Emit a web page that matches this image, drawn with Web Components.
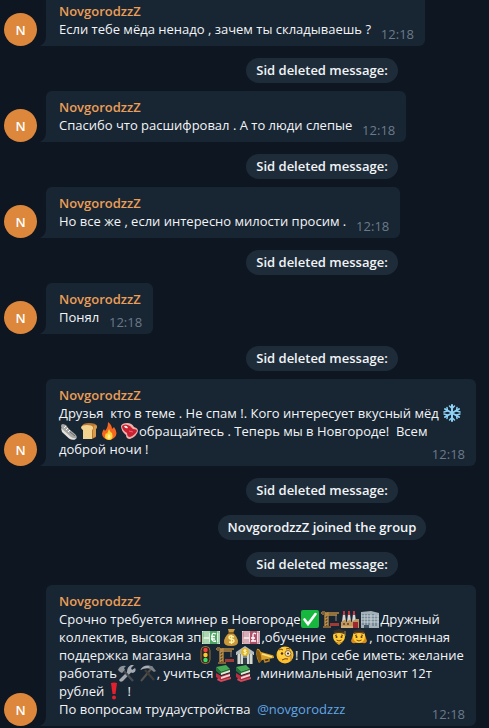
<!DOCTYPE html>
<html lang="ru">
<head>
<meta charset="utf-8">
<title>Chat</title>
<style>
  html { background: #0e1621; }
  body { margin: 0; overflow-x: hidden; background: #0e1621; font: 13px/18px "Open Sans", "Noto Sans", sans-serif; color: #f2f4f6; }
</style>
</head>
<body>
<chat-history>
  <chat-message author="NovgorodzzZ" time="12:18">Если тебе мёда ненадо , зачем ты складываешь ?</chat-message>
  <service-note>Sid deleted message:</service-note>
  <chat-message author="NovgorodzzZ" time="12:18">Спасибо что расшифровал . А то люди слепые</chat-message>
  <service-note>Sid deleted message:</service-note>
  <chat-message author="NovgorodzzZ" time="12:18">Но все же , если интересно милости просим .</chat-message>
  <service-note>Sid deleted message:</service-note>
  <chat-message author="NovgorodzzZ" time="12:18">Понял</chat-message>
  <service-note>Sid deleted message:</service-note>
  <chat-message author="NovgorodzzZ" time="12:18">Друзья  кто в теме . Не спам !. Кого интересует вкусный мёд <emoji-icon name="snow"></emoji-icon> <emoji-icon name="shoe"></emoji-icon><emoji-icon name="bread"></emoji-icon><emoji-icon name="fire"></emoji-icon><emoji-icon name="meat"></emoji-icon>обращайтесь . Теперь мы в Новгороде!  Всем доброй ночи !</chat-message>
  <service-note>Sid deleted message:</service-note>
  <service-note>NovgorodzzZ joined the group</service-note>
  <service-note>Sid deleted message:</service-note>
  <chat-message author="NovgorodzzZ" time="12:18">Срочно требуется минер в Новгороде<emoji-icon name="check"></emoji-icon><emoji-icon name="crane"></emoji-icon><emoji-icon name="factory"></emoji-icon><emoji-icon name="office"></emoji-icon>Дружный коллектив, высокая зп<emoji-icon name="euro"></emoji-icon><emoji-icon name="bag"></emoji-icon><emoji-icon name="pound"></emoji-icon>,обучение <emoji-icon name="student"></emoji-icon><emoji-icon name="girl"></emoji-icon>, постоянная поддержка магазина <emoji-icon name="light"></emoji-icon><emoji-icon name="crane"></emoji-icon><emoji-icon name="bank"></emoji-icon><emoji-icon name="horn"></emoji-icon><emoji-icon name="monocle"></emoji-icon>! При себе иметь: желание работать<emoji-icon name="tools"></emoji-icon><emoji-icon name="picks"></emoji-icon>, учиться<emoji-icon name="books"></emoji-icon><emoji-icon name="books"></emoji-icon> ,минимальный депозит 12т рублей<emoji-icon name="bang"></emoji-icon> !
По вопросам трудаустройства <user-mention handle="novgorodzzz"></user-mention></chat-message>
</chat-history>

<script>
const define = (name, html, setup) => {
  const template = document.createElement('template');
  template.innerHTML = html;
  customElements.define(name, class extends HTMLElement {
    constructor() {
      super();
      this.attachShadow({ mode: 'open' }).append(template.content.cloneNode(true));
    }
    connectedCallback() { if (setup) setup(this, this.shadowRoot); }
  });
};

const crane = '<path d="M4 2v15M7 2v15M4 4h3M4 7l3-3M4 10l3-3M4 13l3-3M4 16l3-3M0 3h18M7 5h9" stroke="#b98a43" stroke-width="1.4" fill="none"/><path d="M1 1h3v4H1z" fill="#80633b"/><path d="M15 5v6" stroke="#9a8468"/><path d="M9 13h9v3H9z" fill="#a23a36"/><path d="M2 16h8v2H2z" fill="#806138"/>';
const face = '<path d="M3 8q0-4 6-4t6 4q0 6-6 7-6-1-6-7z" fill="#ffcc36"/><path d="M5 7.500l2-.5M11 7l2 .5" stroke="#704515"/><circle cx="6.500" cy="9" r="1" fill="#56330e"/><circle cx="11.500" cy="9" r="1" fill="#56330e"/><path d="M6.500 12q2.500 2 5 0" stroke="#81460e" fill="none"/>';
const note = (paper, ink, mark) => `<path d="M0 3h18v13H0z" fill="${paper}"/><path d="M1 4h16v11H1z" fill="none" stroke="${ink}" stroke-width=".7"/><path d="M8 3h7v13H8z" fill="${ink}"/><path d="M1 5h6v4H1zM2 11h5v3H2z" fill="${ink}" opacity=".35"/><path d="${mark}" fill="none" stroke="#fff" stroke-width="1.300"/>`;
const ICONS = {
  snow: '<g fill="none" stroke="#8dd3f7" stroke-width="2" stroke-linecap="round"><path d="M9 1v16M2 5l14 8M16 5L2 13"/><path stroke-width="1.500" d="M6.500 2L9 4.500 11.500 2M6.500 16L9 13.500l2.500 2.500M1 8l3.500-1L4 3.500M17 10l-3.500 1 .5 3.500M1 10l3.500 1-.5 3.500M17 8l-3.500-1L14 3.500"/></g>',
  shoe: '<path d="M1 4q0-2 2-2l3 1 3 4 6 5q3 3 1 5-3 1-5-1L2 8z" fill="#a6a6a4"/><path d="M1 6l10 9q3 2 5 1l-1 1.500q-3 1-6-1L2 10z" fill="#e4e1dc"/><path d="M6 4l-2 2M8 6l-2 2M10 8l-2 2" stroke="#f5f5f5"/><path d="M10 10l5 4" stroke="#66696b"/>',
  bread: '<path d="M2 4q1-3 7-3 7 0 8 3 0 2-1 3v8l-4 2H3V8Q1 6 2 4z" fill="#b97630"/><path d="M1 5q1-2 6-2t6 2q1 2-1 3v9H3V8Q1 7 1 5z" fill="#f4d38e"/><path d="M13 4q2 1 0 4v8l3-2V7q2-2 0-4z" fill="#d69b4c"/>',
  fire: '<path d="M8 0q4 3 4 7l2-2q5 7 0 11-5 4-10 0-4-4 0-9l1 2q3-3 3-9z" fill="#f46721"/><path d="M9 7q1 3 3 4 2 7-3 7-6-1-3-7l1 1z" fill="#ffd637"/><path d="M9 12q3 3 0 5-3-1 0-5z" fill="#fff3a1"/>',
  meat: '<path d="M1 4q1-3 6-3 5 0 7 4 4 1 4 4-1 5-8 8-4 0-4-4-5-4-5-9z" fill="#efb0ac"/><path d="M2 4q3-3 8 0l3 3q4 0 4 2-2 4-7 6-3 0-3-4-5-3-5-7z" fill="#c92132"/><path d="M4 4q3-1 4 2-3 1-4-2z" fill="#fff0e8"/><path d="M9 9l4 1" stroke="#ed6470"/>',
  check: '<rect width="18" height="18" rx="2" fill="#16b83e"/><path d="M3.500 9.500l3.500 4.500L14.500 4" stroke="#fff" stroke-width="2.600" fill="none" stroke-linecap="round"/>',
  crane,
  factory: '<path d="M2 4h2l1 8H1zM7 4h2l1 8H6zM12 4h2l1 8h-4z" fill="#d5d5d5"/><path d="M2 1h2v4H2zM7 1h2v4H7zM12 1h2v4h-2z" fill="#c8333e"/><path d="M0 12l5-3v3l5-3v3l5-3h3v9H0z" fill="#bd965e"/><path d="M2 13h2v2H2zM6 13h2v2H6z" fill="#735435"/><path d="M12 12h5v6h-5z" fill="#9e2832"/><path d="M0 17h12" stroke="#e0c28b"/>',
  office: '<path d="M0 2l10-1v17H0zM10 1l8 2v15h-8z" fill="#a5b1b8"/><path d="M2 4v11M5 4v11M8 4v11M12 4v12M15 5v11" stroke="#5f7a8a" stroke-width="1.300"/><path d="M0 6h18M0 9h18M0 12h18" stroke="#c9d2d6" stroke-width="1"/><path d="M3 15h5v3H3z" fill="#405461"/>',
  euro: note('#dfeeda', '#4da565', 'M14 6q-4-2-4 2v3q0 3 4 2M9 8.500h4M9 11h4'),
  pound: note('#eedde1', '#b0506a', 'M14 6q-3-2-3 1v6M9 10h4M9 13h5'),
  bag: '<path d="M6 1h7l-2 4q5 4 5 9 0 4-7 4t-7-4q0-5 5-9z" fill="#c9983a"/><path d="M6 5h6" stroke="#70491c" stroke-width="1.500"/><path d="M12 9q-5-2-5 0 0 2 2 2 3 0 3 2 0 2-5 1M9.500 7v9" stroke="#fff1a2" stroke-width="1.400" fill="none"/>',
  student: face + '<path d="M2 3l7-2 7 2-7 2z" fill="#38302b"/><path d="M4 4v2q5-2 10 0V4" fill="#574022"/><path d="M15 3v5" stroke="#b48c31"/><path d="M5 14l4 3 4-3-4 1z" fill="#eaa021"/>',
  girl: '<path d="M3 7q0-4 6-4t6 4l2 6q-1 3-4 2H5q-3 1-4-2z" fill="#d88b18"/>' + face + '<path d="M2 3l7-2 7 2-7 2z" fill="#342d2d"/><path d="M4 4v2q5-2 10 0V4" fill="#6c4320"/>',
  light: '<rect x="5" y="0.500" width="9" height="17" rx="4" fill="#2a2926" stroke="#96713a"/><circle cx="9.500" cy="4" r="2.200" fill="#f44242"/><circle cx="9.500" cy="9" r="2.200" fill="#ffc928"/><circle cx="9.500" cy="14" r="2.200" fill="#40da65"/>',
  bank: '<path d="M0 6l9-6 9 6v3H0z" fill="#b6bdbc"/><path d="M1 8h16v10H1z" fill="#7e8786"/><path d="M3 8v10M6 8v10M12 8v10M15 8v10" stroke="#e4e6de" stroke-width="1.700"/><path d="M7 12h4v6H7z" fill="#323f44"/><circle cx="9" cy="6" r="4" fill="#e1b52c"/><path d="M10.500 4.500q-3-1-3 .5l3 1.500q0 2-3 1M9 3v6" stroke="#fff6b5" fill="none"/>',
  horn: '<path d="M1 3q2-1 4 3l11 3q2 0 2 3L6 14l-3 3Q-1 10 1 3z" fill="#d9a026"/><ellipse cx="3" cy="10" rx="2" ry="6.500" transform="rotate(-12 3 10)" fill="#8a5b13"/><path d="M6 8l10 3" stroke="#ffe283" stroke-width="1.500"/><path d="M8 13l1 3 4-1v-2" stroke="#bc8420" stroke-width="1.500" fill="none"/>',
  monocle: '<circle cx="9" cy="9" r="8.500" fill="#ffbf2c"/><circle cx="8" cy="7" r="6" fill="#ffdb50" opacity=".6"/><circle cx="6" cy="7.500" r="1.200" fill="#55310d"/><circle cx="12" cy="7.500" r="3" fill="#f5ead0" stroke="#8d6a2d"/><circle cx="12" cy="7.500" r="1.100" fill="#55310d"/><path d="M3 4q2-2 4 0M10 3q2-1 4 0M6 14q3-2 6-1" stroke="#76430e" fill="none"/><path d="M15 9v6" stroke="#8d6a2d" stroke-width=".7"/>',
  tools: '<path d="M16 1l-3 3 1 2 3-2q2 3-2 5l-2-.5L5 17q-3 2-4-1l8-8q0-5 4-7z" fill="#a3abb1"/><path d="M0 6q2-5 8-4L6 4l1 2-3 3-2-1z" fill="#8b9399"/><path d="M6 7l9 10" stroke="#454b51" stroke-width="2.400"/>',
  picks: '<path d="M3 17L13 5" stroke="#54504b" stroke-width="2"/><path d="M2 6Q7-1 15 3l-1 2Q8 3 2 6z" fill="#aab0b4"/><path d="M7 6l9 10" stroke="#3f3d3b" stroke-width="2.200"/><path d="M11 2l3 0 4 5-2 1-4-3z" fill="#7b8287"/>',
  books: '<path d="M2 3l10-2 4 4-9 3z" fill="#46ab54"/><path d="M2 3v4l5 4 9-3V5L7 8z" fill="#24713a"/><path d="M7 9l9-3v2l-9 3z" fill="#e5e7d8"/><path d="M2 9l5 3 9-3v4l-9 3-5-3z" fill="#b82e40"/><path d="M7 13l9-3v2l-9 3z" fill="#f4d8d8"/><path d="M4 14l3 2 10-3v2L7 18l-4-2z" fill="#d6495a"/>',
  bang: '<path d="M6 1q3-1 6 0l-1.500 11h-3z" fill="#e3202d"/><circle cx="9" cy="15.500" r="2" fill="#e3202d"/>'
};

define('chat-history', `
  <style>
    :host { display: flex; flex-direction: column; margin-top: -5px; padding-bottom: 2px; }
    ::slotted(service-note) { margin-top: 12px; }
    ::slotted(chat-message:not(:first-child)) { margin-top: 8px; }
  </style>
  <slot></slot>`);

define('service-note', `
  <style>
    :host { display: flex; justify-content: center; padding-left: 155px; }
    span { padding: 3px 10px 4px; border-radius: 13px; background: #1e2c3a; font-weight: 600; }
  </style>
  <span><slot></slot></span>`);

define('user-avatar', `
  <style>
    :host { display: grid; place-items: center; flex: none; width: 33px; height: 33px; border-radius: 50%; background: #dc873b; color: #fff; font-weight: 600; }
  </style>
  <span></span>`, (el, root) => { root.querySelector('span').textContent = el.getAttribute('letter'); });

define('chat-message', `
  <style>
    :host { display: flex; align-items: flex-end; padding: 0 12px 0 4px; }
    .tail { flex: none; width: 6px; height: 10px; margin-left: 3px; fill: #182533; }
    article { max-width: 430px; box-sizing: border-box; padding: 7px 11px 8px 13px; border-radius: 6px 6px 6px 0; background: #182533; }
    .name { color: #eb9e56; font-weight: 600; }
    .body { display: grid; }
    .text, time { grid-area: 1 / 1; }
    .text { white-space: pre-wrap; }
    .room { display: inline-block; width: 43px; }
    time { place-self: end; margin-bottom: -5px; color: #6b7a88; }
  </style>
  <user-avatar></user-avatar>
  <svg class="tail" viewBox="0 0 6 10" aria-hidden="true"><path d="M6 0Q6 7 0 10H6z"/></svg>
  <article>
    <div class="name"></div>
    <div class="body"><div class="text"><slot></slot><span class="room"></span></div><time></time></div>
  </article>`, (el, root) => {
    const author = el.getAttribute('author');
    root.querySelector('.name').textContent = author;
    root.querySelector('time').textContent = el.getAttribute('time');
    const avatar = root.querySelector('user-avatar');
    avatar.setAttribute('letter', author[0]);
  });

define('user-mention', `
  <style>
    :host { display: inline; white-space: normal; }
    a { color: #62a8e5; text-decoration: none; }
  </style><a></a>`, (el, root) => {
    const link = root.querySelector('a');
    link.textContent = '@' + el.getAttribute('handle');
    link.href = '#' + el.getAttribute('handle');
  });

define('emoji-icon', `
  <style>
    :host { display: inline-block; width: 18px; height: 18px; padding: 0 1px; vertical-align: top; white-space: normal; }
    svg { display: block; width: 18px; height: 18px; }
  </style>
  <svg viewBox="0 0 18 18" aria-hidden="true"></svg>`, (el, root) => {
    root.querySelector('svg').innerHTML = ICONS[el.getAttribute('name')];
  });

/* The avatar is upgraded before its letter is known, so it is filled in once all messages are connected. */
document.querySelectorAll('chat-message').forEach(message => {
  const avatar = message.shadowRoot.querySelector('user-avatar');
  avatar.shadowRoot.querySelector('span').textContent = avatar.getAttribute('letter');
});
</script>
</body>
</html>
